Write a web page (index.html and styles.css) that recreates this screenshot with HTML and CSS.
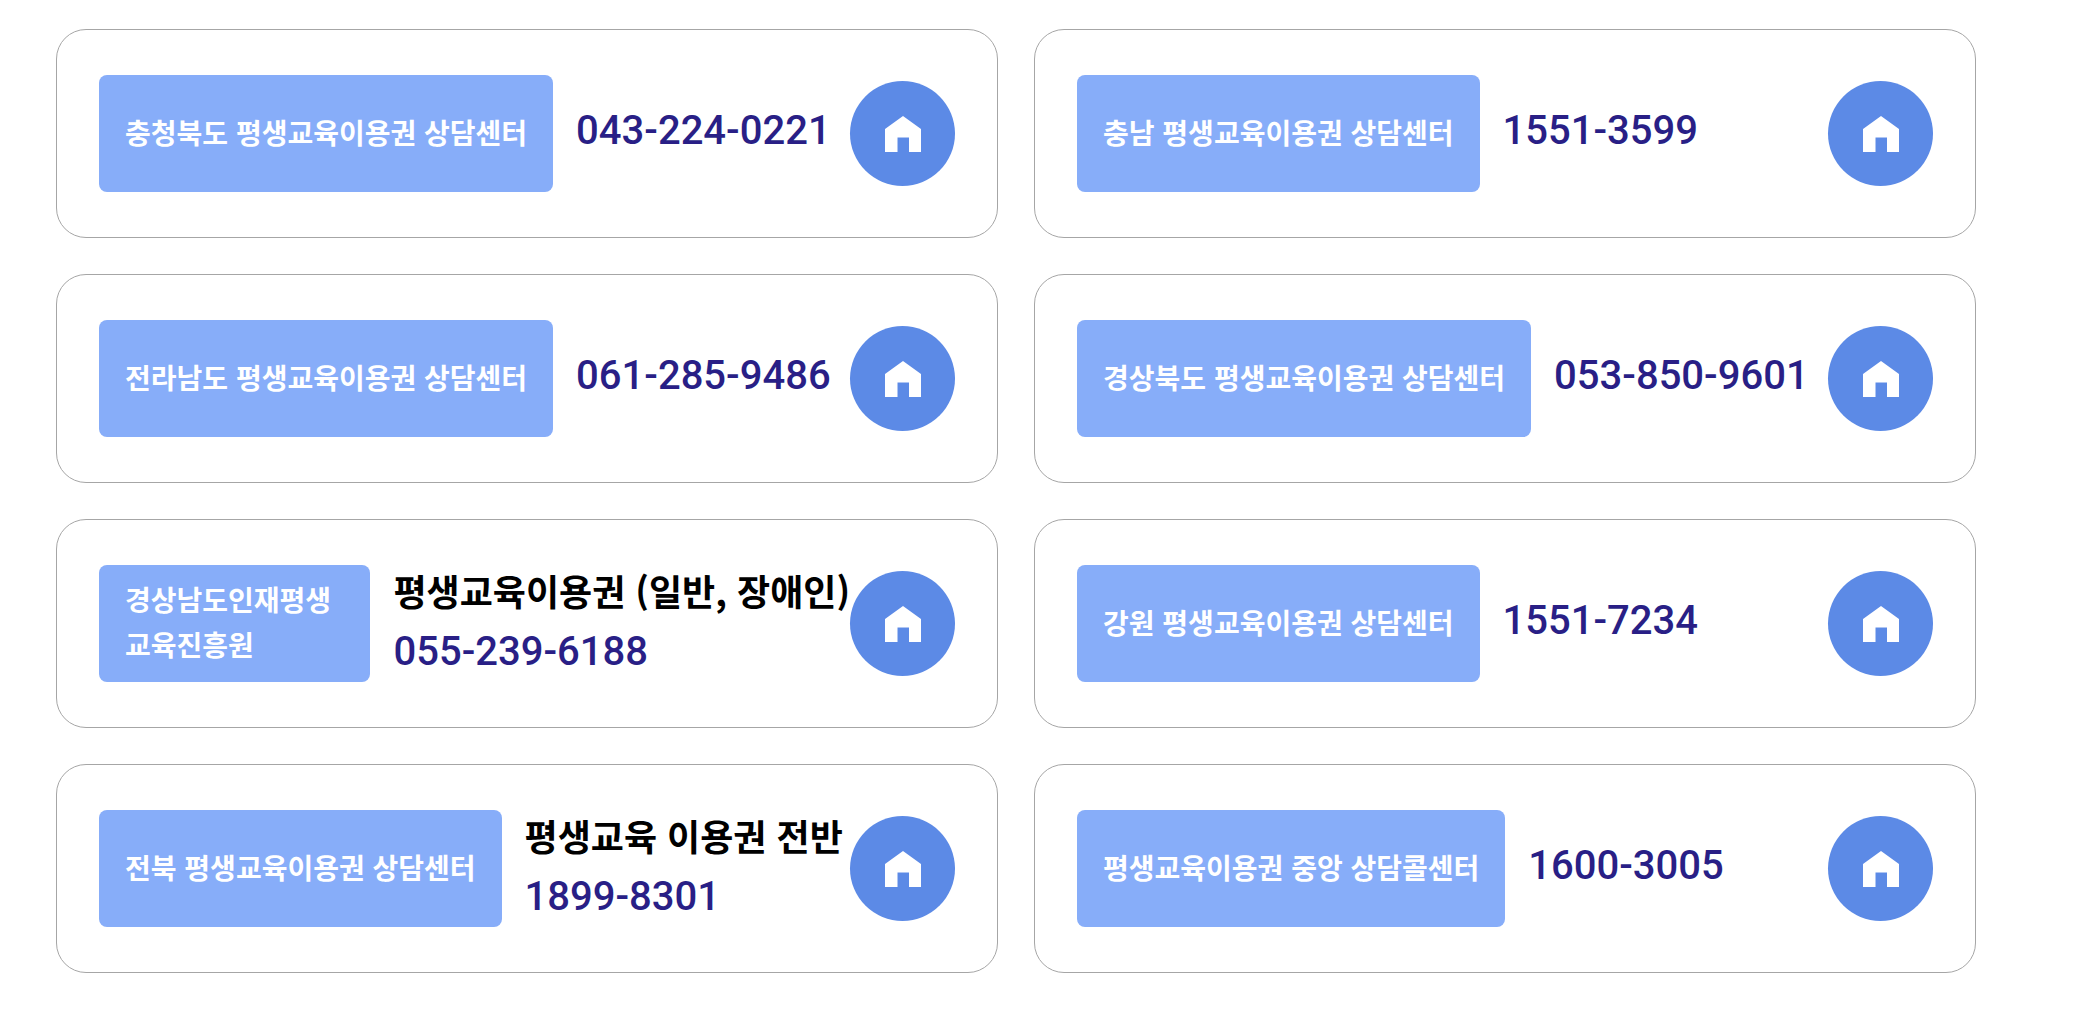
FILE: index.html
```html
<!DOCTYPE html>
<html lang="ko">
<head>
<meta charset="utf-8">
<meta name="viewport" content="width=device-width, initial-scale=1">
<title>평생교육이용권 상담센터</title>
<link rel="stylesheet" href="styles.css">
</head>
<body>
<svg class="symbols" aria-hidden="true">
  <symbol id="home" viewBox="0 0 36 36"><path d="M18 0 36 13V36H24V21.500H12.500V36H0V13Z"/></symbol>
</svg>
<ul class="centers">
  <li class="card">
    <strong class="label">충청북도 평생교육이용권 상담센터</strong>
    <div class="info"><p class="phone">043-224-0221</p></div>
    <a class="home" href="#" aria-label="홈페이지"><svg class="icon"><use href="#home"/></svg></a>
  </li>
  <li class="card">
    <strong class="label">충남 평생교육이용권 상담센터</strong>
    <div class="info"><p class="phone">1551-3599</p></div>
    <a class="home" href="#" aria-label="홈페이지"><svg class="icon"><use href="#home"/></svg></a>
  </li>
  <li class="card">
    <strong class="label">전라남도 평생교육이용권 상담센터</strong>
    <div class="info"><p class="phone">061-285-9486</p></div>
    <a class="home" href="#" aria-label="홈페이지"><svg class="icon"><use href="#home"/></svg></a>
  </li>
  <li class="card">
    <strong class="label">경상북도 평생교육이용권 상담센터</strong>
    <div class="info"><p class="phone">053-850-9601</p></div>
    <a class="home" href="#" aria-label="홈페이지"><svg class="icon"><use href="#home"/></svg></a>
  </li>
  <li class="card">
    <strong class="label">경상남도인재평생교육진흥원</strong>
    <div class="info"><p class="topic">평생교육이용권 (일반, 장애인)</p><p class="phone">055-239-6188</p></div>
    <a class="home" href="#" aria-label="홈페이지"><svg class="icon"><use href="#home"/></svg></a>
  </li>
  <li class="card">
    <strong class="label">강원 평생교육이용권 상담센터</strong>
    <div class="info"><p class="phone">1551-7234</p></div>
    <a class="home" href="#" aria-label="홈페이지"><svg class="icon"><use href="#home"/></svg></a>
  </li>
  <li class="card">
    <strong class="label">전북 평생교육이용권 상담센터</strong>
    <div class="info"><p class="topic">평생교육 이용권 전반</p><p class="phone">1899-8301</p></div>
    <a class="home" href="#" aria-label="홈페이지"><svg class="icon"><use href="#home"/></svg></a>
  </li>
  <li class="card">
    <strong class="label">평생교육이용권 중앙 상담콜센터</strong>
    <div class="info"><p class="phone">1600-3005</p></div>
    <a class="home" href="#" aria-label="홈페이지"><svg class="icon"><use href="#home"/></svg></a>
  </li>
</ul>
</body>
</html>
```
FILE: styles.css
```css
* {
  box-sizing: border-box;
}

body {
  margin: 0;
  background: #fff;
  color: #000;
  font-family: "Noto Sans CJK KR", sans-serif;
}

p {
  margin: 0;
}

.symbols {
  display: none;
}

.centers {
  display: grid;
  grid-template-columns: 1fr 1fr;
  gap: 36px;
  margin: 0;
  padding: 29px 110px 50px 56px;
  list-style: none;
}

.card {
  display: flex;
  align-items: center;
  min-height: 209px;
  padding: 40px 42px;
  border: 1px solid #a6a6a6;
  border-radius: 30px;
}

.label {
  display: flex;
  align-items: center;
  min-height: 117px;
  padding: 0 26px 3px;
  border-radius: 8px;
  background: #87adf9;
  color: #fff;
  font-size: 28px;
  font-weight: 700;
  line-height: 45px;
}

.info {
  flex: none;
  padding: 0 0 5px 23px;
  line-height: 58px;
  white-space: nowrap;
}

.topic {
  margin-bottom: 4px;
  font-size: 36px;
  font-weight: 700;
}

.phone {
  color: #291f86;
  font-family: Roboto, "Noto Sans CJK KR", sans-serif;
  font-size: 40px;
  font-weight: 500;
}

.home {
  display: flex;
  flex: none;
  align-items: center;
  justify-content: center;
  width: 105px;
  height: 105px;
  margin-left: auto;
  border-radius: 50%;
  background: #5c8ae6;
}

.icon {
  width: 36px;
  height: 36px;
  fill: #fff;
}
```
